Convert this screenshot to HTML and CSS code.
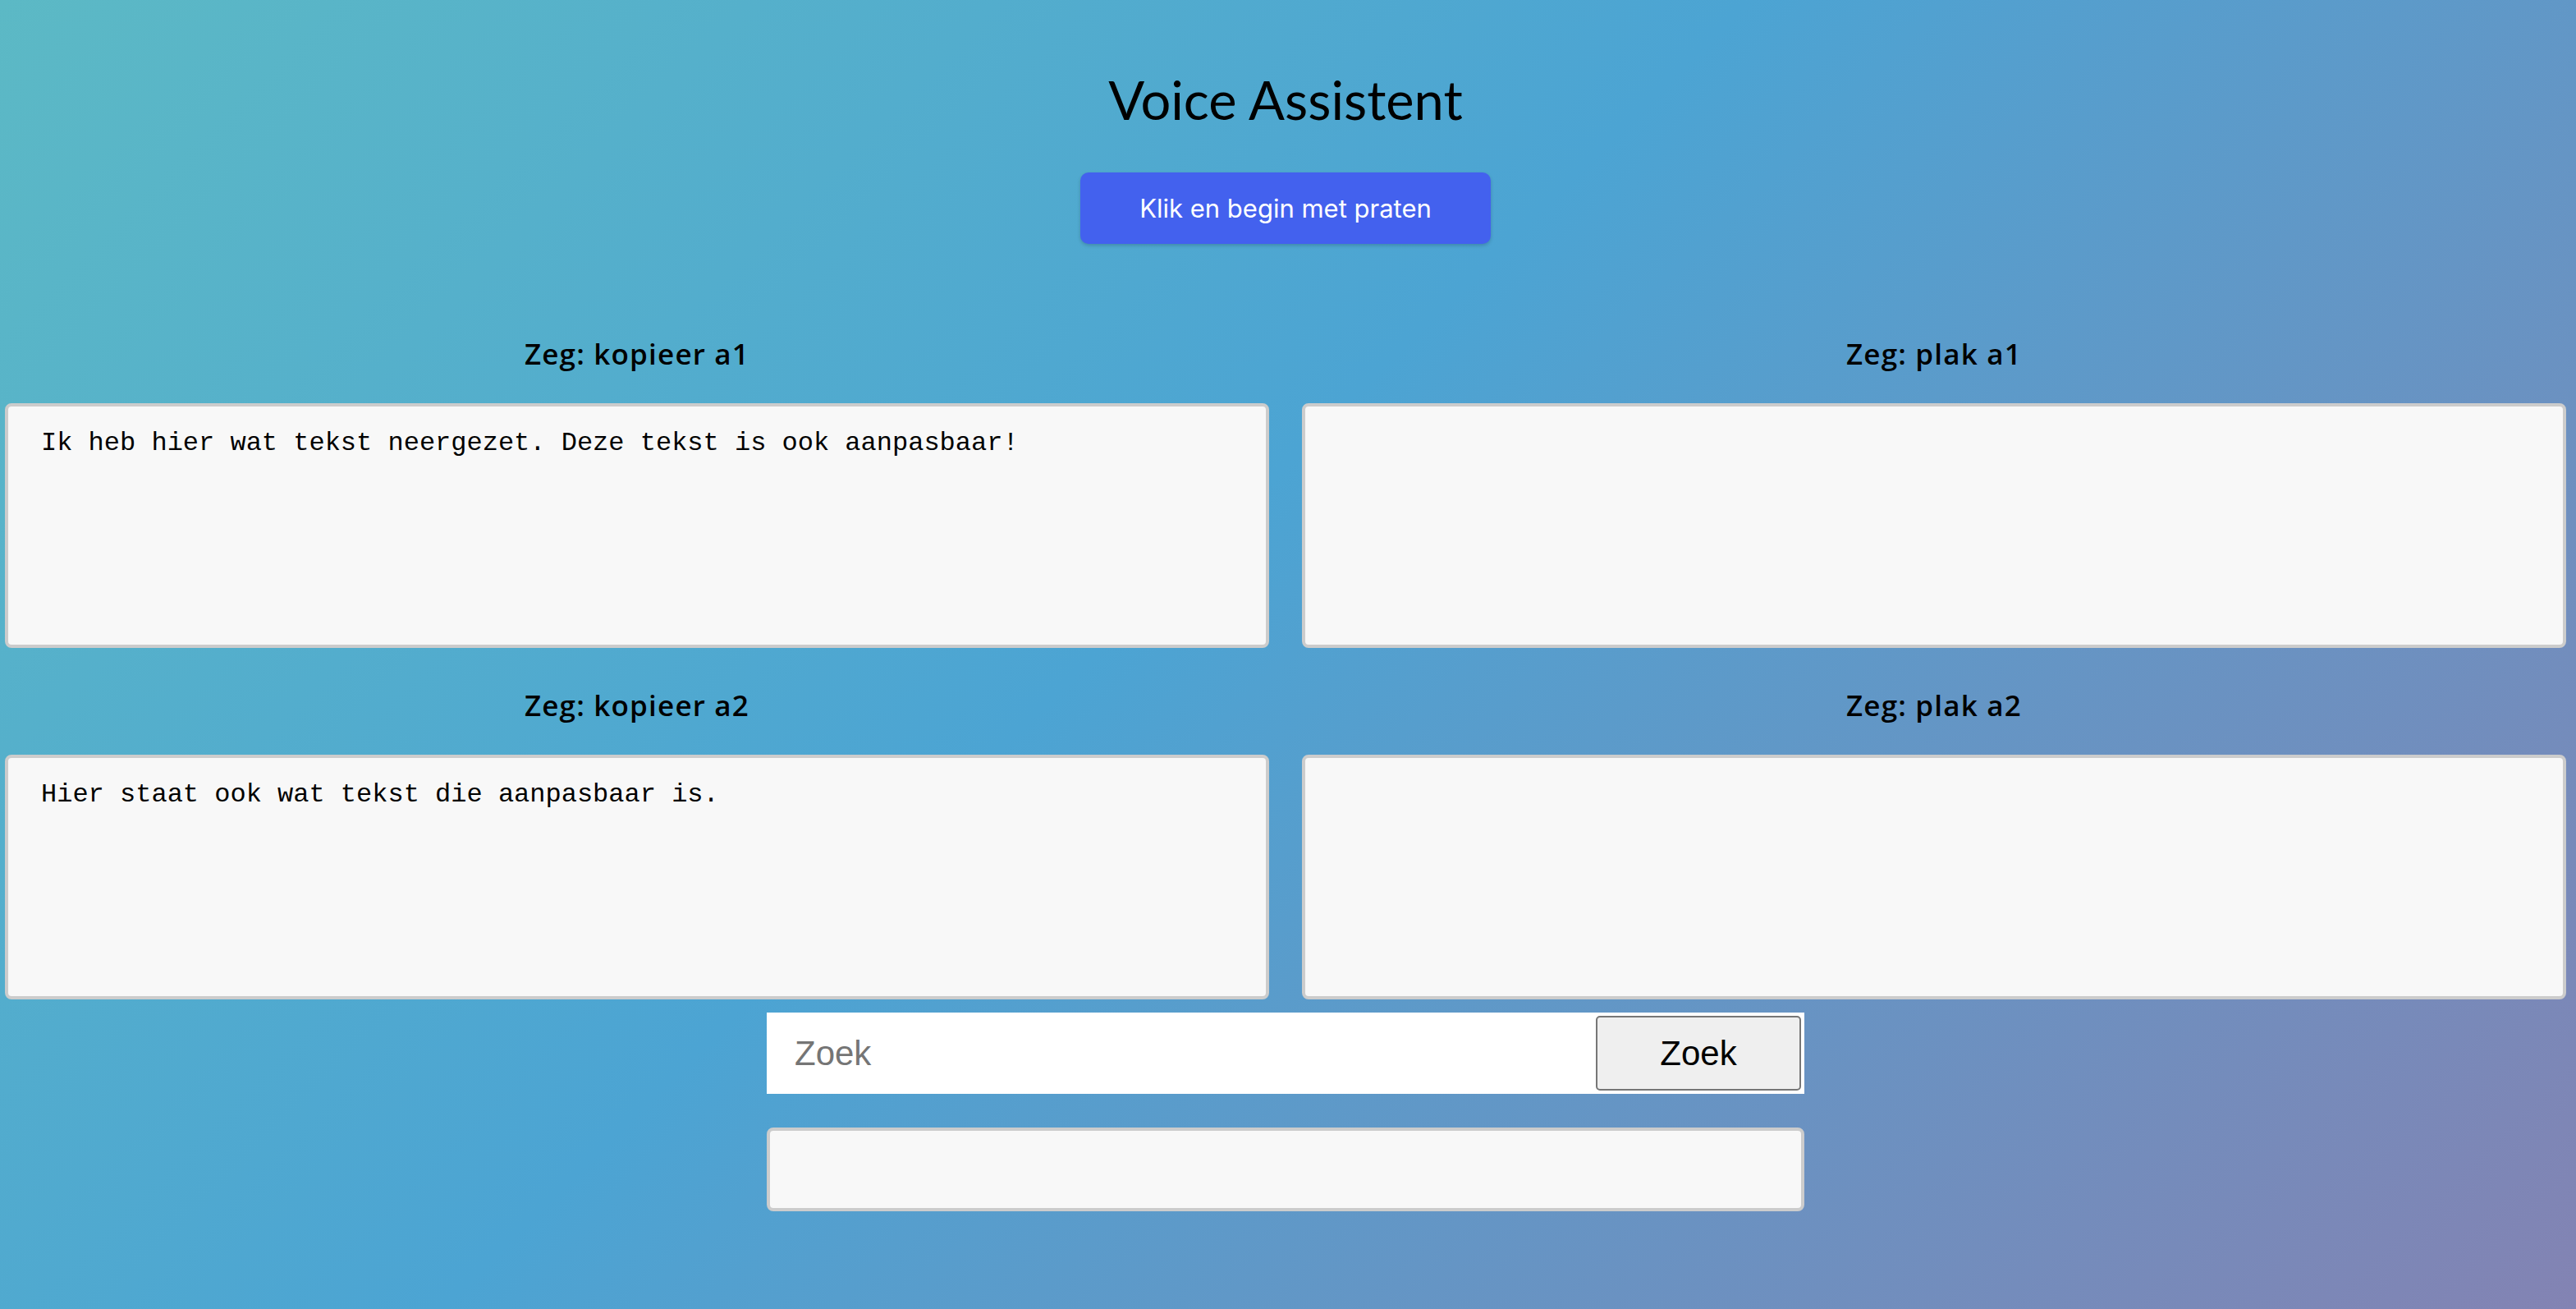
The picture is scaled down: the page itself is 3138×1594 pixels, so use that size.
FILE: index.html
```html
<!DOCTYPE html>
<html lang="nl">
<head>
<meta charset="utf-8">
<title>Voice Assistent</title>
<link rel="stylesheet" href="styles.css">
</head>
<body>
<div class="page">
  <h1 class="title">Voice Assistent</h1>
  <div class="talk-wrap">
    <button class="talk-btn" type="button">Klik en begin met praten</button>
  </div>
  <div class="grid">
    <div class="cell">
      <div class="label">Zeg: kopieer a1</div>
      <textarea class="box">Ik heb hier wat tekst neergezet. Deze tekst is ook aanpasbaar!</textarea>
    </div>
    <div class="cell">
      <div class="label">Zeg: plak a1</div>
      <textarea class="box"></textarea>
    </div>
    <div class="cell">
      <div class="label">Zeg: kopieer a2</div>
      <textarea class="box">Hier staat ook wat tekst die aanpasbaar is.</textarea>
    </div>
    <div class="cell">
      <div class="label">Zeg: plak a2</div>
      <textarea class="box"></textarea>
    </div>
  </div>
  <form class="search" onsubmit="return false;">
    <input class="search-input" type="text" placeholder="Zoek">
    <button class="search-btn" type="submit">Zoek</button>
  </form>
  <textarea class="box result"></textarea>
</div>
</body>
</html>
```
FILE: styles.css
```css
html, body {
  margin: 0;
  padding: 0;
}
body {
  min-height: 1594px;
  background: linear-gradient(135deg, #5cb9c5 0%, #4ca4d3 45%, #8383b3 100%);
  font-family: "Lato", "Noto Sans", sans-serif;
  color: #000;
}
.page {
  padding: 0 12px 0 6px;
  display: flex;
  flex-direction: column;
  align-items: center;
}
.title {
  margin: 82px 0 0;
  font-family: "Lato", sans-serif;
  font-weight: 400;
  font-size: 65px;
  line-height: 78px;
  text-align: center;
}
.talk-wrap {
  margin-top: 50px;
}
.talk-btn {
  font-family: "Inter", "Roboto", sans-serif;
  font-size: 31px;
  font-weight: 400;
  color: #fff;
  background: #4361ee;
  border: none;
  border-radius: 10px;
  width: 500px;
  height: 87px;
  padding: 0;
  box-shadow: 0 2px 4px rgba(0, 0, 0, 0.18);
  cursor: pointer;
}
.grid {
  align-self: stretch;
  margin-top: 111px;
  display: grid;
  grid-template-columns: 1fr 1fr;
  column-gap: 40px;
  row-gap: 47px;
}
.cell {
  display: flex;
  flex-direction: column;
}
.label {
  font-family: "Open Sans", "Lato", sans-serif;
  font-weight: 600;
  font-size: 35px;
  letter-spacing: 1.2px;
  line-height: 42px;
  padding-top: 2px;
  text-align: center;
  margin-bottom: 39px;
}
.box {
  display: block;
  box-sizing: border-box;
  width: 100%;
  height: 298px;
  margin: 0;
  padding: 26px 40px 22px;
  background: #f8f8f8;
  border: 4px solid #cccccc;
  border-radius: 8px;
  font-family: "Liberation Mono", "DejaVu Sans Mono", monospace;
  font-size: 32px;
  color: #000;
  resize: none;
  outline: none;
}
.search {
  margin: 16px 0 0;
  box-sizing: border-box;
  width: 1264px;
  height: 99px;
  background: #fff;
  display: flex;
  align-items: stretch;
  padding: 4px 4px 4px 0;
}
.search-input {
  flex: 1;
  min-width: 0;
  border: none;
  outline: none;
  background: transparent;
  padding: 0 0 0 34px;
  font-family: "Liberation Sans", Arial, sans-serif;
  font-size: 42px;
  color: #000;
}
.search-input::placeholder {
  color: #757575;
}
.search-btn {
  width: 250px;
  box-sizing: border-box;
  background: #efefef;
  border: 2px solid #767676;
  border-radius: 5px;
  font-family: "Liberation Sans", Arial, sans-serif;
  font-size: 42px;
  color: #000;
  padding: 0;
  cursor: pointer;
}
.result {
  width: 1264px;
  height: 102px;
  margin-top: 41px;
}
```
